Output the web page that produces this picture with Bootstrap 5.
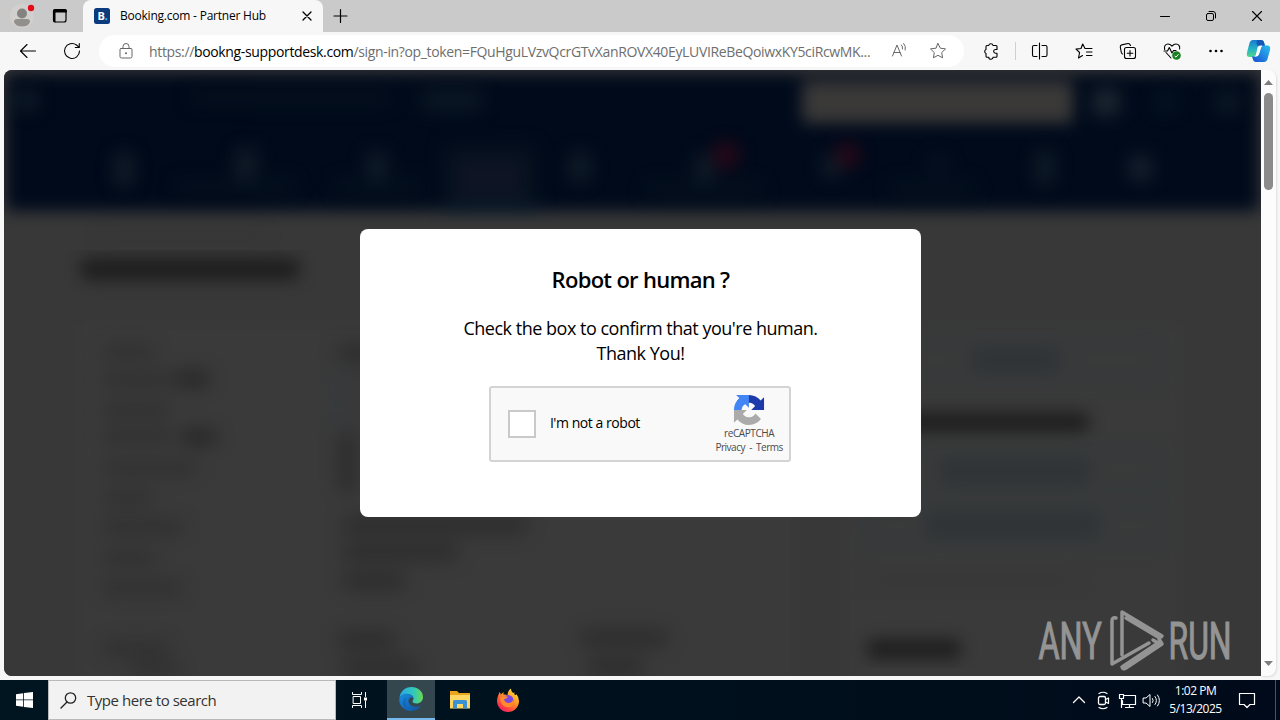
<!DOCTYPE html>
<html lang="en">
<head>
  <meta charset="UTF-8">
  <title>Desktop</title>
  <link href="https://cdn.jsdelivr.net/npm/bootstrap@5.3.0/dist/css/bootstrap.min.css" rel="stylesheet">
  <style>
    body {
      width: 1280px;
      height: 720px;
      overflow: hidden;
      background: #f7f7f7;
      color: #000;
      font-family: "Open Sans", "Noto Sans", sans-serif;
    }
    svg { display: block; flex: none; }
    .ln { fill: none; stroke: currentColor; stroke-linecap: round; stroke-linejoin: round; }

    /* tab strip */
    .tabstrip { height: 32px; background: #cacaca; }
    .strip-left { width: 83px; padding-left: 9px; gap: 12px; border-bottom-right-radius: 4px; }
    .tab-active { width: 240px; height: 32px; background: #f7f7f7; border-radius: 8px 8px 0 0; padding-left: 11px; }
    .tab-title { font-size: 12px; letter-spacing: -.22px; margin-left: 10px; width: 181px; }
    .win-btn { width: 46px; height: 32px; }

    /* toolbar */
    .toolbar { height: 38px; padding-left: 6px; }
    .tool { width: 44px; height: 38px; }
    .addressbar { width: 865px; height: 32px; margin: 0 5px; background: #fff; border-radius: 16px; padding-left: 18px; }
    .url { width: 734px; margin-left: 14px; font-size: 14px; letter-spacing: -.35px; color: #6e6e6e; }
    .tool-sep { width: 1px; height: 18px; background: #cfcfcf; margin: 0 2px; }

    /* page */
    .viewport { height: 610px; padding: 0 4px 4px; }
    .page { width: 1257px; height: 606px; background: #393939; border-radius: 8px 0 0 8px; }
    .scroller { width: 15px; background: #fcfcfc; border-radius: 0 8px 8px 0; padding: 10px 0 10px; box-shadow: 1px 1px 2px #ddd; }
    .thumb { width: 9px; height: 97px; margin-top: 8px; border-radius: 5px; background: #8b8b8b; }

    .dialog-box { width: 561px; height: 288px; left: 356px; top: 159px; background: #fff; border-radius: 8px; padding-top: 35px; }
    .dialog-box h1 { font-size: 22px; line-height: 30px; font-weight: 600; letter-spacing: -.7px; margin: 0 0 22px; }
    .dialog-box p { font-size: 18px; line-height: 25px; letter-spacing: -.49px; margin: 0 0 20px; }
    .captcha { width: 302px; height: 76px; margin-left: 129px; background: #f9f9f9; border: 2px solid #d3d3d3; border-radius: 3px; padding-left: 17px; }
    .tick { width: 28px; height: 28px; background: #fff; border: 2px solid #c9c9c9; }
    .captcha-label { font-size: 14px; letter-spacing: -.45px; margin-left: 14px; width: 160px; padding-bottom: 3px; }
    .captcha-brand { width: 80px; font-size: 10px; line-height: 14px; letter-spacing: -.5px; color: #4b4b4b; padding-top: 6px; }
    .brand-name { letter-spacing: -.4px; }
    .watermark { left: 1026px; top: 536px; }

    /* taskbar */
    .taskbar { height: 40px; background: linear-gradient(90deg, #001520, #00101d 55%, #000a1a); color: #fff; }
    .start { width: 48px; }
    .searchbox { width: 288px; height: 40px; background: #f2f2f2; border: 1px solid #b9b9b9; color: #333; padding-left: 11px; font-size: 15px; letter-spacing: -.46px; }
    .search-hint { margin-left: 10px; }
    .task { width: 48px; height: 40px; }
    .task-on { background: #34474e; border-bottom: 2px solid #76b9ed; margin-left: 3px; margin-right: 1px; }
    .tray { padding-right: 4px; }
    .clock { width: 65px; font-size: 12px; line-height: 18px; letter-spacing: -.5px; }
    .notif { width: 38px; }
    .show-desk { width: 1px; height: 40px; background: #4b5361; margin-left: 9px; }
  </style>
</head>
<body>

<!-- Tabs -->
<div class="tabstrip d-flex">
  <div class="strip-left d-flex align-items-center">
    <svg width="28" height="28" viewBox="0 0 28 28"><circle cx="13" cy="14" r="12" fill="#d2d0ce"/><circle cx="13" cy="11.500" r="5" fill="#858380"/><path d="M5 20c0-3 2-3 4-3h8c2 0 4 0 4 3-1 3-4 4.500-8 4.500S6 23 5 20z" fill="#92908d"/><circle cx="22" cy="6" r="3.200" fill="#e30b17"/></svg>
    <svg width="22" height="20" viewBox="0 0 22 20"><rect class="ln" x="4.500" y="3.500" width="12.500" height="12.500" rx="2" stroke-width="1.200"/><path d="M4 6.500V5q0-2 2-2h10q2 0 2 2v1.500zM4 6h2.500v10.500H6q-2 0-2-2z"/></svg>
  </div>
  <div class="tab-active d-flex align-items-center">
    <svg width="16" height="16" viewBox="0 0 16 16"><rect width="16" height="16" rx="2.500" fill="#0b3b7c"/><text x="3.500" y="12" font-size="11" font-weight="700" fill="#fff">B</text><circle cx="12.200" cy="11.200" r="1.100" fill="#31b2f2"/></svg>
    <div class="tab-title text-nowrap">Booking.com - Partner Hub</div>
    <svg width="12" height="12" viewBox="0 0 12 12"><path class="ln" d="M2 2l8 8M10 2l-8 8" stroke-width="1.300"/></svg>
  </div>
  <div class="d-flex align-items-center ps-2 ms-0">
    <svg width="18" height="18" viewBox="0 0 18 18"><path class="ln" d="M9.500 2.500v13M3 9h13" stroke-width="1.200"/></svg>
  </div>
  <div class="d-flex ms-auto">
    <div class="win-btn d-flex align-items-center justify-content-center"><svg width="12" height="12"><path class="ln" d="M1.500 6.500h9"/></svg></div>
    <div class="win-btn d-flex align-items-center justify-content-center"><svg width="12" height="12"><rect class="ln" x="1.500" y="3.500" width="7" height="7" rx="1.500"/><path class="ln" d="M4 1.500h4q2.500 0 2.500 2.500v4"/></svg></div>
    <div class="win-btn d-flex align-items-center justify-content-center"><svg width="12" height="12"><path class="ln" d="M1.500 1.500l9 9M10.500 1.500l-9 9" stroke-width="1.100"/></svg></div>
  </div>
</div>

<!-- Toolbar -->
<div class="toolbar d-flex align-items-center">
  <div class="tool d-flex align-items-center justify-content-center"><svg width="20" height="18" viewBox="0 0 20 18"><path class="ln" d="M17.500 9H2.500M9 2.500L2.500 9 9 15.500" stroke-width="1.100"/></svg></div>
  <div class="tool d-flex align-items-center justify-content-center"><svg width="20" height="20" viewBox="0 0 20 20"><path class="ln" d="M17.500 10A7.500 7.500 0 1 1 14.500 4L17 6.200M17.300 2.500v4h-4" stroke-width="1.100"/></svg></div>
  <div class="addressbar d-flex align-items-center">
    <svg width="18" height="18" viewBox="0 0 18 18" color="#666"><path class="ln" d="M4 6.500h10q1 0 1 1v7q0 1.500-1.500 1.500h-9Q3 16 3 14.500v-7q0-1 1-1zM6 6.500V4.500a3 3 0 0 1 6 0v2"/><circle cx="9" cy="11.300" r="1" fill="#666"/></svg>
    <div class="url text-nowrap">https://<span class="text-black">bookng-supportdesk.com</span>/sign-in?op_token=FQuHguLVzvQcrGTvXanROVX40EyLUVIReBeQoiwxKY5ciRcwMK...</div>
    <svg width="36" height="20" viewBox="0 0 36 20" color="#666"><path class="ln" d="M9.500 15L14 4l4.500 11M11 11.500h6M18.500 4q1.500 1.500 1 4M20.700 2.500q2.500 2.500 1.500 6.500"/></svg>
    <svg class="ms-2 ps-0" width="22" height="18" viewBox="-2 0 22 18" color="#666"><path class="ln" d="M9 1.500l2.300 4.700 5.200.7-3.800 3.700.9 5.200L9 13.300l-4.600 2.500.9-5.200L1.500 6.900l5.200-.7z"/></svg>
  </div>
  <div class="tool d-flex align-items-center justify-content-center"><svg width="18" height="18" viewBox="0 0 18 18"><path class="ln" d="M5 3.500h1.700a2.200 2.200 0 0 1 4.300 0h3q1 0 1 1v3h-1.500a1.800 1.800 0 0 0 0 3.700H15v3q0 1-1 1h-3a2.100 2.100 0 0 1-4.200 0H5q-1 0-1-1v-2.700a2.200 2.200 0 0 1 0-4V4.500q0-1 1-1z" stroke-width="1.100"/></svg></div>
  <div class="tool-sep"></div>
  <div class="tool d-flex align-items-center justify-content-center"><svg width="18" height="18" viewBox="0 0 18 18"><path class="ln" d="M8.500 1v16M6 3.500H3Q1.500 3.500 1.500 5v8q0 1.500 1.500 1.500h3M11 3.500h3.500Q16 3.500 16 5v8q0 1.500-1.500 1.500H11" stroke-width="1.100"/></svg></div>
  <div class="tool d-flex align-items-center justify-content-center"><svg width="18" height="18" viewBox="0 0 18 18"><path class="ln" d="M10 6.500L7.700 2 6 6.500l-5 .6 3.600 3.400L3.500 16l4-2.500M10 6.500h7M11.500 10H17M11.500 13.500H17" stroke-width="1.100"/></svg></div>
  <div class="tool d-flex align-items-center justify-content-center"><svg width="18" height="18" viewBox="0 0 18 18"><rect class="ln" x="5.500" y="5.500" width="11" height="11" rx="2" stroke-width="1.100"/><path class="ln" d="M11 8.500v5.500M8.300 11.200h5.500M3.500 12Q2.500 11.500 2.200 10L1.300 5q-.2-1.700 1.400-2.100L9 1.500q1.700-.2 2.500 2" stroke-width="1.100"/></svg></div>
  <div class="tool d-flex align-items-center justify-content-center"><svg width="18" height="18" viewBox="0 0 18 18"><path class="ln" d="M1.700 7.500C.8 4 2.500 2 5 2c2 0 3 1 4 2.200C10 3 11 2 13 2c2.500 0 4.200 2 3.600 5M3 10.500l5 5.500M1 9h3.500l1.800-3.500L9 11l1.500-2.500H13" stroke-width="1.100"/><circle cx="13.500" cy="13.500" r="4.300" fill="#16801f"/><path d="M11.600 14l1.400 1.200 2.500-3" fill="none" stroke="#fff"/></svg></div>
  <div class="tool d-flex align-items-center justify-content-center"><svg width="18" height="18"><circle cx="3.500" cy="9" r="1.300"/><circle cx="9" cy="9" r="1.300"/><circle cx="14.500" cy="9" r="1.300"/></svg></div>
  <svg class="ms-2" width="25" height="24" viewBox="0 0 25 24">
    <defs>
      <linearGradient id="copA" x1="0" y1="0" x2="0" y2="1"><stop offset="0" stop-color="#167bd0"/><stop offset=".55" stop-color="#25b5c2"/><stop offset="1" stop-color="#54d68e"/></linearGradient>
      <linearGradient id="copB" x1="1" y1="0" x2="0" y2="1"><stop offset="0" stop-color="#29c0ee"/><stop offset="1" stop-color="#174ed2"/></linearGradient>
    </defs>
    <path d="M7 1h8q2.500 0 3.200 3l.8 3h-3q-3 0-4 3l-1.700 5.500Q9.500 18 7 18H3.500Q0 18 1 13.500L3.500 4Q4.500 1 7 1z" fill="url(#copA)"/>
    <path d="M11 1h4q2.500 0 3.200 3l.8 3h-5q-3 0-3.500-2z" fill="#1557b7"/>
    <path d="M18 23h-8q-2.500 0-3.200-3L6 17.500h3q3 0 4-3L14.700 9Q15.500 6.500 18 6.500h3.500Q25 6.500 24 11l-2.500 9q-1 3-3.500 3z" fill="url(#copB)"/>
    <path d="M11.500 8.500Q12.300 6.500 14.500 6.500h2q-1 .8-1.400 2L13.300 14.500q-.8 3-3.300 3H8.500q1-.5 1.500-2z" fill="#fff"/>
  </svg>
</div>

<!-- Page -->
<div class="viewport d-flex">
  <div class="page position-relative overflow-hidden">
    <svg width="1257" height="606" viewBox="4 70 1257 606">
      <defs>
        <filter id="soft" x="-5%" y="-5%" width="110%" height="110%" color-interpolation-filters="sRGB"><feGaussianBlur stdDeviation="8"/></filter>
        <filter id="soft2" x="-5%" y="-10%" width="110%" height="120%" color-interpolation-filters="sRGB"><feGaussianBlur stdDeviation="9"/></filter>
      </defs>
      <g filter="url(#soft)">
        <rect x="-40" y="30" width="1340" height="700" fill="#383838"/>
        <rect x="80" y="325" width="715" height="400" fill="#3a3a3a"/>
        <rect x="845" y="325" width="335" height="400" fill="#3a3a3a"/>
        <rect x="6" y="73" width="1253" height="138" fill="#000a1b"/>
        <rect x="802" y="81" width="271" height="42" fill="#3a3938"/>
      </g>
      <g filter="url(#soft2)" opacity=".62">
        <g fill="#1b2730">
          <rect x="14" y="90" width="24" height="20"/><rect x="422" y="90" width="60" height="20" fill="#15212b"/>
          <rect x="1093" y="89" width="26" height="26" fill="#313b40"/><rect x="1156" y="93" width="20" height="18" fill="#0c1b27"/><rect x="1217" y="93" width="22" height="18"/>
          <rect x="114" y="152" width="20" height="35"/><rect x="235" y="148" width="22" height="35"/><rect x="367" y="152" width="20" height="30"/>
          <rect x="570" y="152" width="20" height="30"/><rect x="695" y="155" width="18" height="30"/><rect x="822" y="155" width="20" height="22"/>
          <rect x="929" y="155" width="18" height="18" fill="#0c1728"/><rect x="1036" y="150" width="18" height="35"/><rect x="1129" y="156" width="23" height="25" fill="#252d38"/>
        </g>
        <path d="M443 145h93v62h-93z" fill="#081420"/><path d="M445 204h95v6h-95z" fill="#143042"/>
        <path d="M190 98h200M175 187h120M335 187h85M645 189h118M890 189h85" stroke="#081420" stroke-width="15"/>
        <rect x="455" y="157" width="70" height="42" fill="#171b28"/>
        <circle cx="726" cy="155" r="13" fill="#480614"/><circle cx="848" cy="155" r="12" fill="#480614"/>
      </g>
      <g filter="url(#soft)" fill="none" stroke="#1a1a1a" stroke-linecap="round" opacity=".85">
        <path d="M90 269h200" stroke-width="22"/>
        <path d="M880 422h200" stroke-width="20"/>
        <path d="M876 649h76" stroke-width="20"/>
      </g>
      <g filter="url(#soft2)" fill="none" stroke-linecap="round" opacity=".6">
        <path d="M105 237h155M350 380h80M870 580h205" stroke="#353535" stroke-width="10"/>
        <path d="M109 352h40M109 380h60M109 410h54M109 436h57M109 468h81M109 498h38M109 527h68M109 558h40M109 588h67M109 648h53M137 668h36" stroke="#2a2a2a" stroke-width="14"/>
        <path d="M184 379h18M189 437h20" stroke="#1c1c1c" stroke-width="17"/>
        <path d="M345 353h40M347 440v45M350 525h170M350 552h100M350 581h48M346 640h42M350 668h60M588 638h72M596 667h40" stroke="#252525" stroke-width="18"/>
        <path d="M338 375v50" stroke="#2f3a41" stroke-width="8"/>
        <path d="M870 343h292v34H870zM870 453h292v36H870zM870 508h292v35H870z" stroke="#2d3a3f" stroke-width="6"/>
        <path d="M980 360h72M948 471h134M933 525h159" stroke="#252d33" stroke-width="20"/>
      </g>
    </svg>

    <div class="dialog-box position-absolute text-center">
      <h1>Robot or human ?</h1>
      <p>Check the box to confirm that you're human.<br>Thank You!</p>
      <div class="captcha d-flex align-items-center text-start">
        <div class="tick"></div>
        <div class="captcha-label">I'm not a robot</div>
        <div class="captcha-brand align-self-start text-center">
          <svg class="mx-auto" width="32" height="32" viewBox="-2 -2 68 68">
            <path d="M64 31.955l-.033-1.370V4.687l-7.160 7.160C50.948 4.674 42.033.093 32.050.093c-10.400 0-19.622 4.960-25.458 12.640l11.736 11.860a15.550 15.550 0 0 1 4.754-5.334c2.050-1.600 4.952-2.906 8.968-2.906.485 0 .860.057 1.135.163 4.976.393 9.288 3.140 11.828 7.124l-8.307 8.307L64 31.953" fill="#1c3aa9"/>
            <path d="M31.862.094l-1.370.033H4.594l7.160 7.160C4.580 13.147 0 22.060 0 32.046h16.260c0-.485.057-.860.163-1.135.393-4.976 3.140-9.288 7.124-11.828l8.307 8.307z" fill="#4285f4"/>
            <path d="M.001 32.045l.033 1.370v25.898l7.160-7.160c5.860 7.173 14.774 11.754 24.760 11.754 10.400 0 19.622-4.960 25.458-12.640l-11.736-11.860a15.550 15.550 0 0 1-4.754 5.334c-2.050 1.600-4.952 2.906-8.968 2.906-.485 0-.860-.057-1.135-.163-4.976-.393-9.288-3.140-11.828-7.124l8.307-8.307z" fill="#ababab"/>
          </svg>
          <div class="brand-name text-nowrap">reCAPTCHA</div>
          <div class="text-nowrap">Privacy &nbsp;-&nbsp; Terms</div>
        </div>
      </div>
    </div>

    <svg class="watermark position-absolute" width="216" height="70" viewBox="1030 606 216 70">
      <g fill="#949494" stroke="#949494" stroke-width="1.200" font-family="Roboto" font-size="51">
        <text transform="translate(1038.500 659) scale(.635 1)">ANY</text>
        <text transform="translate(1168.500 659) scale(.625 1)">RUN</text>
      </g>
      <g fill="none" stroke="#949494" stroke-width="3.500" stroke-linecap="round" stroke-linejoin="round">
        <path d="M1116 618q-4-1-4 3v43l37-21"/>
        <path d="M1122 655v-43l40 24q-1 2-4 1l-32-19"/>
        <path d="M1159 639l3 5-36 24q-3 2-4-1l36-24-5-3"/>
      </g>
    </svg>
  </div>
  <div class="scroller d-flex flex-column align-items-center">
    <svg width="9" height="5"><path d="M0 5l4.500-5L9 5z" fill="#7d7d7d"/></svg>
    <div class="thumb"></div>
    <svg class="mt-auto" width="9" height="5"><path d="M0 0l4.500 5L9 0z" fill="#7d7d7d"/></svg>
  </div>
</div>

<!-- Taskbar -->
<div class="taskbar d-flex align-items-center">
  <div class="start d-flex justify-content-center"><svg width="17" height="16" viewBox="0 0 17 16" fill="#fff"><path d="M0 2.200l7.200-1v6.300H0zM8 1l9-1v7.500H8zM0 8.300h7.200v6.500l-7.200-1zM8 8.300h9V16l-9-1z"/></svg></div>
  <div class="searchbox d-flex align-items-center">
    <svg width="17" height="17" viewBox="0 0 17 17" color="#222"><circle class="ln" cx="10.500" cy="6" r="5.200" stroke-width="1.300"/><path class="ln" d="M7 10l-6 6" stroke-width="1.400"/></svg>
    <div class="search-hint text-nowrap">Type here to search</div>
  </div>
  <div class="task d-flex align-items-center justify-content-center"><svg width="18" height="18" viewBox="0 0 18 18"><path class="ln" d="M1.500 1.500v2h9v-2M1.500 16.500v-2h9v2M2.500 5.500h7v7h-7zM14.500 1.500v4M14.500 10v6.500"/><path d="M13 6.500h3v3h-3z" fill="#fff"/></svg></div>
  <div class="task task-on d-flex align-items-center justify-content-center">
    <svg width="24" height="24" viewBox="0 0 24 24">
      <defs><linearGradient id="edgeA"><stop offset="0" stop-color="#2aa7e4"/><stop offset=".6" stop-color="#32c8bd"/><stop offset="1" stop-color="#69db52"/></linearGradient>
      <linearGradient id="edgeB" x1="0" y1="0" x2="1" y2="1"><stop offset="0" stop-color="#188fe0"/><stop offset="1" stop-color="#12519d"/></linearGradient></defs>
      <path d="M.5 11C1 4.500 6 0 12.500 0 19 0 24 4.500 24 10c0 4-3 6.500-6.500 6.500-2.500 0-4-1-4-2 0-.8 1-1.200 1-3C14.500 8.500 11.500 7 8 7c-4 0-6.500 2-7.500 4z" fill="url(#edgeA)"/>
      <path d="M.3 13C.3 9 4 6.500 8.500 6.700c3.500.3 5.500 2 6 4.300-3-1.500-5.500.5-5 3.500.6 4 5.500 7 12.500 4-2 3.400-5.500 5.500-9.800 5.500C5.500 24 .3 19 .3 13z" fill="url(#edgeB)"/>
      <path d="M7.500 10.500c-3 5 .5 12 6 13.300-4.500.8-9.500-2.300-9.500-7 0-3 1.500-5.300 3.500-6.300z" fill="#1466ba"/>
    </svg>
  </div>
  <div class="task d-flex align-items-center justify-content-center">
    <svg width="22" height="20" viewBox="0 0 22 20"><path d="M1 1h7l2 2h11v4H1z" fill="#e9a51c"/><path d="M1 5h20v13.500H1z" fill="#fdd664"/><path d="M4 11.500q0-1.500 1.500-1.500h11q1.500 0 1.500 1.500v7h-4V14H8v4.500H4z" fill="#3b91d4"/></svg>
  </div>
  <div class="task d-flex align-items-center justify-content-center">
    <svg width="24" height="24" viewBox="0 0 24 24">
      <defs><linearGradient id="foxA" x1=".9" y1="0" x2=".2" y2="1"><stop offset="0" stop-color="#fff04a"/><stop offset=".4" stop-color="#ff9d22"/><stop offset=".8" stop-color="#ff3c45"/><stop offset="1" stop-color="#e81f70"/></linearGradient></defs>
      <path d="M1 13C1 9 2.500 7.500 3.500 4q1 .5 1.200 2.500L7.500 4v2.500q2-.3 4 .5Q12 2 15 .5q-.3 2.500 2 4.500l1.500-.5-.2 1.700Q20 8 20.300 6q2.700 3 2.700 7a11 11 0 0 1-22 0z" fill="url(#foxA)"/>
      <circle cx="12" cy="12.500" r="5.500" fill="#7a48e0"/>
      <path d="M4 10q3-2.500 8-1.500-1.500 2.500-4 2.700Q9 15 12.500 15q3.500 0 4.500-3 2 4-1.500 6.500-5 2-8.500-1Q4 14 4 10z" fill="#ff8b2d"/>
    </svg>
  </div>
  <div class="tray d-flex align-items-center ms-auto">
    <svg width="24" height="20" viewBox="0 0 24 20"><path class="ln" d="M6.500 12.500L12 7l5.500 5.500" stroke-width="1.300"/></svg>
    <svg width="24" height="20" viewBox="0 0 24 20"><rect class="ln" x="7.500" y="6.500" width="7" height="8" rx="1.500" stroke-width="1.300"/><path class="ln" d="M14.500 9.500l3-1.500v5.500l-3-1.500M8 3.500q4-2.500 8 0M8 17.500q4 2.500 8 0" stroke-width="1.200"/></svg>
    <svg width="24" height="20" viewBox="0 0 24 20"><path class="ln" d="M8.500 5.500h12v9H7.500v-4M14.500 14.500v3M10.500 17.500h8M4.500 4.500h4v4h-4zM6.500 8.500v9" stroke-width="1.200"/></svg>
    <svg width="24" height="20" viewBox="0 0 24 20"><path class="ln" d="M4.500 8h2.500l4-3.500v12L7 13H4.500zM13.500 8.500q1.500 2 0 4M16 6.500q3 4 0 8M18.500 5q4 5.500 0 11"/></svg>
    <div class="clock text-center text-nowrap">1:02 PM<br>5/13/2025</div>
    <div class="notif d-flex justify-content-center"><svg width="20" height="18" viewBox="0 0 20 18"><path class="ln" d="M2.500 2.500h15v11H13l-3 3-3-3H2.500z" stroke-width="1.200"/></svg></div>
    <div class="show-desk"></div>
  </div>
</div>

<script src="https://cdn.jsdelivr.net/npm/bootstrap@5.3.0/dist/js/bootstrap.bundle.min.js"></script>
</body>
</html>
